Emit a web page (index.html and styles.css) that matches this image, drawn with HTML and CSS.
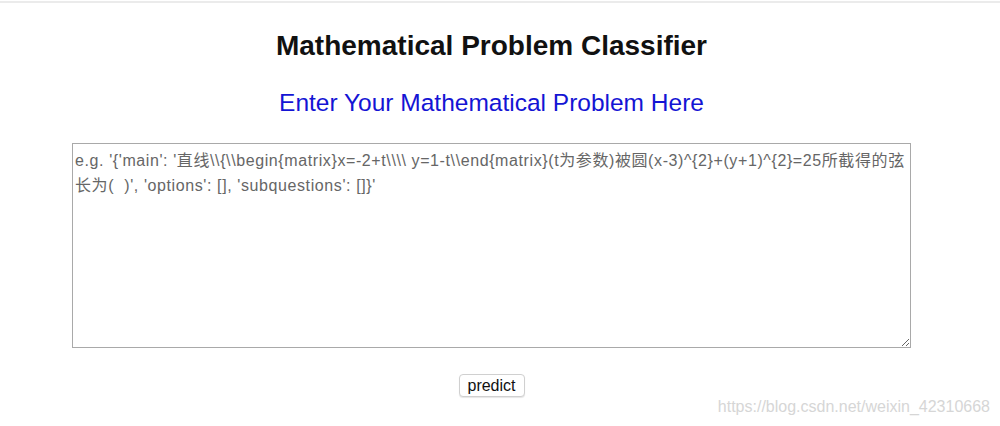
FILE: index.html
```html
<!DOCTYPE html>
<html lang="en">
<head>
    <meta charset="UTF-8">
    <meta name="viewport" content="width=device-width, initial-scale=1.0">
    <title>Mathematical Problem Classifier</title>
    <link rel="stylesheet" href="styles.css">
</head>
<body>
    <div class="topbar"></div>
<div class="container">
    <h1 class="title">Mathematical Problem Classifier</h1>
    <h2 class="subtitle">Enter Your Mathematical Problem Here</h2>
    <form class="form">
        <textarea class="problem" placeholder="e.g. '{'main': '直线\\{\\begin{matrix}x=-2+t\\\\ y=1-t\\end{matrix}(t为参数)被圆(x-3)^{2}+(y+1)^{2}=25所截得的弦长为(  )', 'options': [], 'subquestions': []}'"></textarea>
        <button class="predict" type="button">predict</button>
    </form>
</div>
<div class="mark">https://blog.csdn.net/weixin_42310668</div>
</body>
</html>
```

FILE: styles.css
```css
*{
    margin: 0;
    padding: 0;
    box-sizing: border-box;
}
body{
    width: 100%;
    min-height: 100vh;
    background-color: white;
    font-family: "Liberation Sans", Arial, "Noto Sans CJK SC", sans-serif;
    position: relative;
    overflow: hidden;
}
.topbar{
    height: 3px;
    border-top: 1px solid #fff;
    background-color: #ebebeb;
}
.container{
    width: 983px;
    display: flex;
    flex-direction: column;
    align-items: center;
}
.title{
    font-size: 28px;
    font-weight: bold;
    color: #111;
    margin-top: 27px;
    line-height: 32px;
}
.subtitle{
    font-size: 24.5px;
    font-weight: normal;
    color: #1414d4;
    margin-top: 27px;
    line-height: 28px;
}
.form{
    display: flex;
    flex-direction: column;
    align-items: center;
}
.problem{
    width: 839px;
    height: 205px;
    margin-top: 26px;
    border: 1px solid #a9a9a9;
    padding: 4px 2px;
    font-family: "Liberation Sans", Arial, "Noto Sans CJK SC", sans-serif;
    font-size: 16px;
    letter-spacing: 0.6px;
    line-height: 25px;
    resize: both;
    outline: none;
}
.problem::placeholder{
    color: #666;
}
.predict{
    margin-top: 26px;
    width: 66px;
    height: 23px;
    font-family: "Liberation Sans", Arial, sans-serif;
    font-size: 16px;
    color: #111;
    background-color: #fff;
    border: 1px solid #d0d0d0;
    border-radius: 4px;
    box-shadow: 0 1px 1px rgba(0,0,0,0.1);
}
.mark{
    position: absolute;
    right: 10px;
    bottom: 10px;
    font-size: 16px;
    color: #d6d6d6;
}
```
